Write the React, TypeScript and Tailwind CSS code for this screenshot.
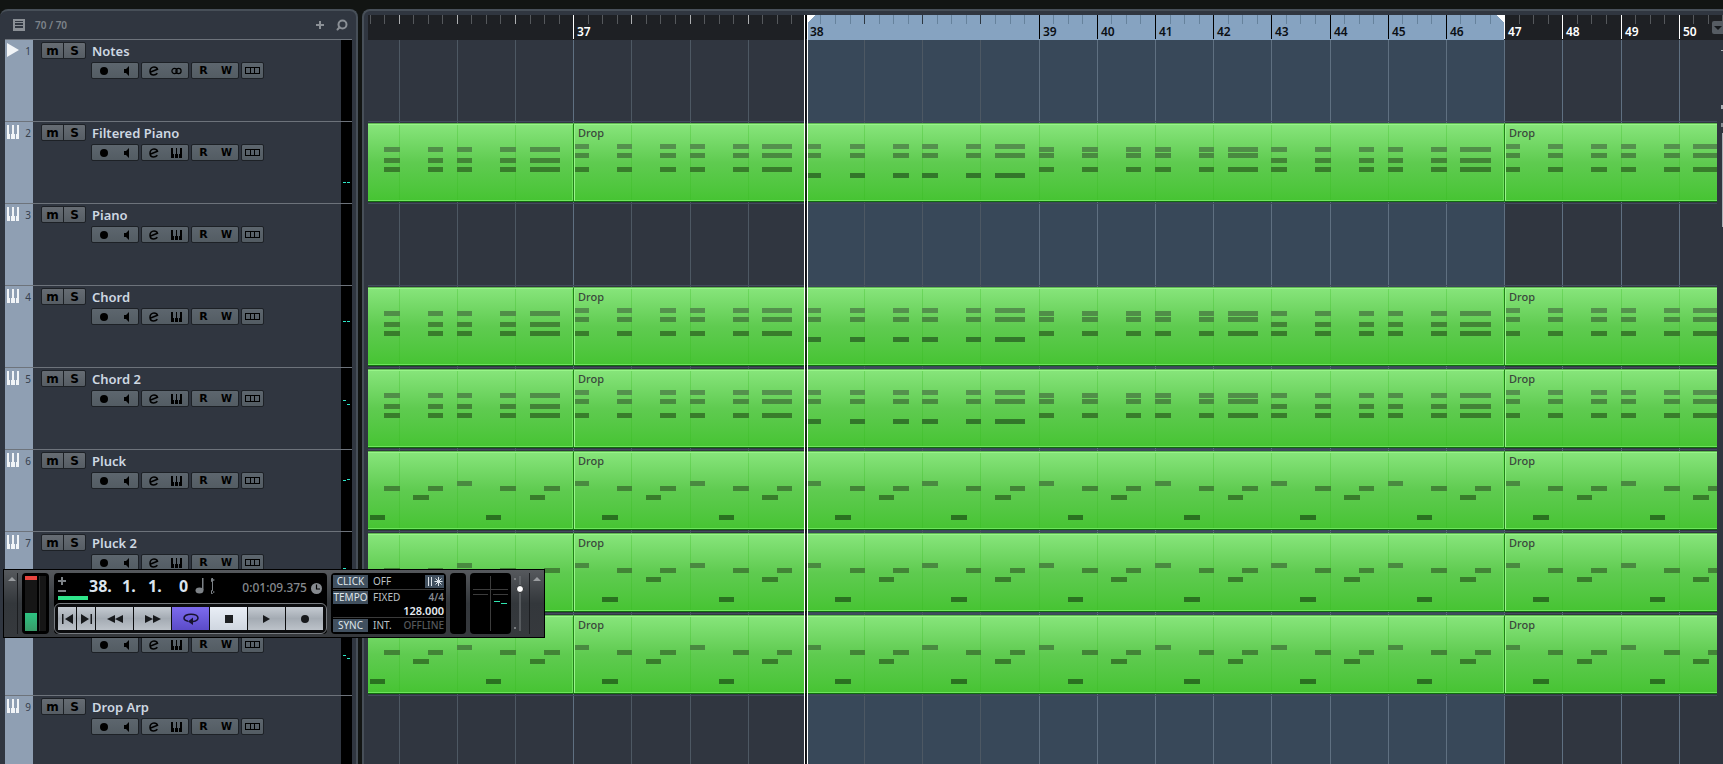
import React, { useState } from 'react';
import { Search } from 'lucide-react';

type Pattern = 'chordA' | 'chordB' | 'chordC' | 'chordD' | 'pluck';

interface Track {
  id: number;
  name: string;
  kind: 'marker' | 'instrument';
  content?: 'chord' | 'pluck';
  meter?: [number, number];
}

interface Section {
  cell: number;
  pattern: Pattern;
}

interface ClipData {
  start: number;
  end: number;
  label?: string;
  sections: Section[];
}

// One cell is the space between two grid lines, four ticks each
const ORIGIN = 31.12;
const CELL = 58.185;
const cellX = (cell: number) => Math.floor(ORIGIN + cell * CELL);

const tracks: Track[] = [
  { id: 1, name: 'Notes', kind: 'marker' },
  { id: 2, name: 'Filtered Piano', kind: 'instrument', content: 'chord', meter: [60, 60] },
  { id: 3, name: 'Piano', kind: 'instrument' },
  { id: 4, name: 'Chord', kind: 'instrument', content: 'chord', meter: [35, 35] },
  { id: 5, name: 'Chord 2', kind: 'instrument', content: 'chord', meter: [32, 36] },
  { id: 6, name: 'Pluck', kind: 'instrument', content: 'pluck', meter: [30, 29] },
  { id: 7, name: 'Pluck 2', kind: 'instrument', content: 'pluck', meter: [36, 40] },
  { id: 8, name: '', kind: 'instrument', content: 'pluck', meter: [41, 44] },
  { id: 9, name: 'Drop Arp', kind: 'instrument' },
];

const chordHits = [[0, 1], [3, 1], [6, 1], [8, 1], [11, 1], [13, 2]];
const chordRows: Record<string, number[]> = {
  chordA: [24, 35, 44],
  chordB: [21, 30, 44],
  chordC: [21, 30, 50],
  chordD: [24, 30, 44],
};
const pluckHits: [number, number][] = [
  [0, 30], [2, 64], [3, 35], [5, 44], [6, 35], [8, 30], [10, 64], [11, 35], [13, 44], [14, 35],
];

const noteColors: Record<number, string> = {
  21: '#54914d',
  24: '#508e48',
  30: '#498a40',
  35: '#428436',
  44: '#387d2b',
  50: '#32772a',
  64: '#2a7220',
};

const clips: ClipData[] = [
  { start: -13, end: 3, sections: [{ cell: -1, pattern: 'chordA' }] },
  {
    start: 3,
    end: 19,
    label: 'Drop',
    sections: [
      { cell: 3, pattern: 'chordB' },
      { cell: 7, pattern: 'chordC' },
      { cell: 11, pattern: 'chordD' },
      { cell: 15, pattern: 'chordA' },
    ],
  },
  {
    start: 19,
    end: 35,
    label: 'Drop',
    sections: [
      { cell: 19, pattern: 'chordB' },
      { cell: 23, pattern: 'chordC' },
      { cell: 27, pattern: 'chordD' },
      { cell: 31, pattern: 'chordA' },
    ],
  },
];

const bars: Record<number, number> = { 3: 37, 7: 38 };
for (let i = 11; i <= 22; i++) bars[i] = 28 + i;

const LOOP_START = 7;
const LOOP_END = 19;
const cells = Array.from({ length: 40 }, (_, i) => i);

function getNotes(section: Section) {
  if (section.pattern === 'pluck') {
    return pluckHits.map(([tick, y]) => ({ tick, len: 1, y }));
  }
  return chordHits.flatMap(([tick, len]) =>
    chordRows[section.pattern].map(y => ({ tick, len, y }))
  );
}

function Clip({ clip, content }: { clip: ClipData; content: 'chord' | 'pluck' }) {
  const left = cellX(clip.start);
  const width = cellX(clip.end) - left;
  const sections = content === 'chord'
    ? clip.sections
    : clip.sections.map(s => ({ ...s, pattern: 'pluck' as Pattern }));
  const lines = cells.filter(c => c > clip.start && c < clip.end);

  return (
    <div
      className="absolute top-px h-[79px] overflow-hidden border-y border-l border-t-[#5fb852] border-b-[#0f6b0c] border-l-[#23801a] bg-linear-to-b from-[#87e57b] via-[#5fcb50] to-[#46c432] shadow-[inset_1px_1px_0_#98f589,inset_-1px_-1px_0_#6de55c]"
      style={{ left, width }}
    >
      {lines.map(c => (
        <div key={c} className="absolute inset-y-px w-px bg-[#34b81e]/30" style={{ left: cellX(c) - left - 1 }} />
      ))}
      {clip.label && (
        <span className="absolute left-1 top-px text-[11px] font-medium leading-4 text-[#3a483c]">{clip.label}</span>
      )}
      <svg className="absolute -top-px left-px h-full w-full" shapeRendering="crispEdges">
        {sections.flatMap(section =>
          getNotes(section).map(n => {
            const x = cellX(section.cell + n.tick / 4);
            const end = cellX(section.cell + (n.tick + n.len) / 4) + 1;
            return (
              <rect
                key={`${section.cell}-${n.tick}-${n.y}`}
                x={x - left - 2}
                y={n.y}
                width={end - x}
                height="5"
                fill={noteColors[n.y]}
              />
            );
          })
        )}
      </svg>
    </div>
  );
}

function KeysIcon() {
  return (
    <svg className="h-3.5 w-3" viewBox="0 0 12 14" fill="currentColor" shapeRendering="crispEdges">
      <path d="M0 0h2v9h1v5H0zM5 0h2v9h1v5H4V9h1zM10 0h2v14H9V9h1z" />
    </svg>
  );
}

function MiniKeysIcon() {
  return (
    <svg className="h-2.5 w-[11px]" viewBox="0 0 11 10" fill="currentColor" shapeRendering="crispEdges">
      <path d="M0 0h2v6h1v4H0zM5 0h1v6h1v4H4V6h1zM9 0h2v10H8V6h1z" />
    </svg>
  );
}

function TrackControls({ track }: { track: Track }) {
  const group = 'flex h-[17px] items-center rounded-xs border border-[#1d2126] bg-linear-to-b from-[#5d666e] to-[#535c63] text-black';
  const cell = 'flex h-full w-6 flex-1 items-center justify-center';

  return (
    <div className="ml-[58px] mt-px flex gap-0.5">
      <div className={`${group} w-12`}>
        <button className={cell} aria-label={`Record enable ${track.name}`}>
          <span className="h-2 w-2 rounded-full bg-black" />
        </button>
        <button className={cell} aria-label={`Monitor ${track.name}`}>
          <svg className="h-2.5 w-2" viewBox="0 0 8 10" fill="currentColor">
            <path d="M1 3h2L6 0v10L3 7H1z" />
          </svg>
        </button>
      </div>
      <div className={`${group} w-12`}>
        <button className={cell} aria-label={`Edit ${track.name}`}>
          <svg className="h-2.5 w-2.5" viewBox="0 0 10 10" fill="none" stroke="currentColor" strokeWidth="1.500">
            <path d="M1 6.200L8.500 3.200C8 1.500 6.500.9 5 .9 2.500.9 1 3 1 5.200 1 7.500 2.600 9 4.700 9c1.500 0 2.700-.6 3.700-1.700" />
          </svg>
        </button>
        <button className={cell} aria-label={`Open instrument ${track.name}`}>
          {track.kind === 'marker' ? (
            <svg className="h-2 w-[11px]" viewBox="0 0 11 8" fill="none" stroke="currentColor" strokeWidth="1.200">
              <circle cx="3.500" cy="4" r="2.600" />
              <circle cx="7.500" cy="4" r="2.600" />
            </svg>
          ) : (
            <MiniKeysIcon />
          )}
        </button>
      </div>
      <div className={`${group} w-12 font-['DejaVu_Sans'] text-[11px] font-bold leading-none`}>
        <button className={cell} aria-label={`Read automation ${track.name}`}>R</button>
        <button className={`${cell} text-[10px]`} aria-label={`Write automation ${track.name}`}>W</button>
      </div>
      <div className={`${group} w-[23px]`}>
        <button className={cell} aria-label={`Show lanes ${track.name}`}>
          <svg className="h-[7px] w-[15px]" viewBox="0 0 15 7" fill="none" stroke="currentColor" shapeRendering="crispEdges">
            <path d="M.5.5h14v6H.5zM5.500.5v6M9.500.5v6" />
          </svg>
        </button>
      </div>
    </div>
  );
}

function TrackRow({ track }: { track: Track }) {
  return (
    <li className="flex h-[82px] shrink-0 border-t border-[#6d737b]">
      <div className="flex w-7 justify-between bg-[#8f9fb3] pl-0.5 pr-0.5 pt-[3px] text-[#f1f4f7]">
        {track.kind === 'marker' ? (
          <svg className="h-3.5 w-3" viewBox="0 0 12 14" fill="currentColor">
            <path d="M0 0l12 7L0 14z" />
          </svg>
        ) : (
          <KeysIcon />
        )}
        <span className="text-[10px] leading-4 text-[#36404d]">{track.id}</span>
      </div>
      <div className="flex-1">
        <div className="flex h-[19px] items-start pl-2 pt-0.5">
          <div className="flex h-[17px] w-[45px] rounded-xs border border-[#1d2126] bg-linear-to-b from-[#666c73] to-[#565d64] font-['DejaVu_Sans'] text-xs font-bold leading-[14px] text-black">
            <button className="flex-1 border-r border-[#1d2126]" aria-label={`Mute ${track.name}`}>m</button>
            <button className="flex-1" aria-label={`Solo ${track.name}`}>S</button>
          </div>
          <span className="ml-1.5 text-[13px] font-semibold leading-[19px] text-[#ced8e2]">{track.name}</span>
        </div>
        <div className="pt-0.5">
          <TrackControls track={track} />
        </div>
      </div>
      <div className="relative w-[11px] bg-black">
        {track.meter?.map((y, i) => (
          <div
            key={i}
            className={i === 0 ? 'absolute left-0.5 h-px w-[3px] bg-[#2ee6c8]' : 'absolute left-1.5 h-px w-[3px] bg-[#2ee6c8]'}
            style={{ top: y }}
          />
        ))}
      </div>
    </li>
  );
}

function Ruler() {
  const loopLeft = cellX(LOOP_START);
  const loopRight = cellX(LOOP_END);
  const inLoop = (c: number) => c >= LOOP_START && c < LOOP_END;
  const ticks = Array.from({ length: 164 }, (_, i) => i / 4 - 1);

  return (
    <div className="relative h-[25px] shrink-0 overflow-hidden bg-[#1e2024]">
      <div className="absolute inset-y-0 bg-[#86a3c1]" style={{ left: loopLeft, width: loopRight - loopLeft }} />
      <svg className="absolute inset-0 h-full w-full" shapeRendering="crispEdges">
        {ticks.map(c => {
          const isCell = Number.isInteger(c);
          const isBar = bars[c] !== undefined;
          const loop = inLoop(c);
          let fill = loop ? '#66829c' : '#55585c';
          if (isCell) fill = loop ? '#2c3640' : '#aeb0b2';
          if (isBar) fill = loop ? '#000000' : '#ffffff';
          return <rect key={c} x={cellX(c)} y="0" width="1" height={isBar ? 24 : 9} fill={fill} />;
        })}
        <path d={`M${loopLeft + 1} 0h8l-8 8z`} fill="#fff" />
        <path d={`M${loopRight} 0h-8l8 8z`} fill="#fff" />
      </svg>
      {Object.entries(bars).map(([c, bar]) => (
        <span
          key={bar}
          className={`absolute top-[9px] text-xs font-semibold leading-4 ${inLoop(Number(c)) ? 'text-[#0b0f14]' : 'text-white'}`}
          style={{ left: cellX(Number(c)) + 4 }}
        >
          {bar}
        </span>
      ))}
      <button className="absolute right-0 top-1.5 flex h-[13px] w-[11px] items-center justify-center rounded-l-xs bg-[#565c63]" aria-label="Ruler options">
        <svg className="h-1.5 w-2" viewBox="0 0 8 6" fill="#15181c"><path d="M0 1h8L4 5z" /></svg>
      </button>
    </div>
  );
}

function Timeline() {
  const loopLeft = cellX(LOOP_START);
  const loopRight = cellX(LOOP_END);

  return (
    <main className="relative flex min-w-0 flex-1 flex-col rounded-tl-lg border-l-2 border-t-2 border-[#474f58] bg-[#303640] pl-1 pt-1">
      <Ruler />
      <div className="flex min-h-0 flex-1">
        <div className="relative min-w-0 flex-1 overflow-hidden">
          <div className="absolute inset-y-0 bg-[#384859]" style={{ left: loopLeft, width: loopRight - loopLeft }} />
          {cells.map(c => (
            <div
              key={c}
              className={`absolute inset-y-0 w-px ${bars[c] ? 'bg-[#5f7081]' : 'bg-[#4d5863]'}`}
              style={{ left: cellX(c) }}
            />
          ))}
          {tracks.map(track => (
            <div key={track.id} className="relative h-[82px] border-b border-[#424b5c]">
              {track.content && clips.map(clip => (
                <Clip key={clip.start} clip={clip} content={track.content!} />
              ))}
            </div>
          ))}
        </div>
        {/* zoom controls and scrollbar */}
        <div className="flex w-1.5 flex-col items-end">
          <span className="mt-2.5 h-px w-0.5 bg-[#aab0b6]" />
          <span className="mt-[54px] h-1 w-0.5 bg-[#aab0b6]" />
          <span className="mt-3.5 h-1 w-0.5 bg-[#888e94]" />
          <span className="mt-1.5 h-[94px] w-px bg-[#aab0b6]" />
        </div>
      </div>
      {/* playhead */}
      <div className="absolute bottom-0 top-1 ml-1 w-1 border-x border-white bg-black/75" style={{ left: loopLeft - 2 }} />
    </main>
  );
}

function Transport() {
  const [level, setLevel] = useState(80);
  const key = 'flex w-[37px] items-center justify-center bg-linear-to-b from-[#c5cbd2] via-[#a4abb3] to-[#bcc2c9] text-[#17191c]';
  const tag = 'h-[13px] w-[35px] bg-[#41505f] text-center text-[#dfe5ea]';

  return (
    <section
      aria-label="Transport"
      className="absolute left-[3px] top-[569px] flex h-[69px] w-[542px] border border-black bg-linear-to-b from-[#56595d] via-[#33373b] to-[#36393d] py-[3px]"
    >
      <button className="flex w-3.5 justify-center border-r border-[#1b1d20] pt-1" aria-label="Collapse left">
        <svg className="ml-0.5 h-1 w-2" viewBox="0 0 8 4" fill="#9a9da0"><path d="M0 4l4-4 4 4z" /></svg>
      </button>

      <div className="ml-1 flex w-[27px] gap-0.5 rounded-sm bg-black p-[3px]">
        <div className="flex w-3 flex-col justify-between bg-[#161616]">
          <div className="h-1 bg-[#e8453f]" />
          <div className="h-[18px] bg-linear-to-b from-[#2cc382] to-[#379a68]" />
        </div>
        <div className="flex-1 border-l border-[#303030] bg-[#161616]" />
      </div>

      <div className="ml-[5px] flex w-[273px] flex-col rounded-sm bg-black">
        <div className="flex h-[30px] items-center">
          <div className="ml-1 flex w-[30px] flex-col">
            <svg className="h-[18px] w-2" viewBox="0 0 8 18" stroke="#7d8287" strokeWidth="2" shapeRendering="crispEdges">
              <path d="M0 5h8M4 1v8M0 15h8" />
            </svg>
            <div className="mt-0.5 h-1 w-full bg-[#2fe58b]" />
          </div>
          <div className="-mt-1 ml-px flex text-base font-bold leading-5 text-[#dbe4ee]">
            <span className="w-[33px]">38.</span>
            <span className="w-[26px]">1.</span>
            <span className="w-[31px]">1.</span>
            <span className="w-4">0</span>
          </div>
          <svg className="-mt-1 h-[18px] w-5" viewBox="0 0 20 18" fill="#7d8287">
            <path d="M7 1h1.500v12H7z" />
            <ellipse cx="4.500" cy="13.500" rx="4" ry="3" />
            <path d="M17 1h1v16h-1zM16 1l4 2-4 2zM16 17l4-2-4-2z" />
          </svg>
          <span className="ml-auto text-xs font-medium text-[#85898e]">0:01:09.375</span>
          <svg className="ml-1 mr-[5px] h-[11px] w-[11px]" viewBox="0 0 11 11">
            <circle cx="5.500" cy="5.500" r="5.500" fill="#85898e" />
            <path d="M5.500 1.500v4.500h3.500" fill="none" stroke="#000" strokeWidth="1.200" />
          </svg>
        </div>
        <div className="flex h-[31px] gap-px rounded-md border border-[#777b80] bg-[#0b0c0e] p-[3px]">
          <button className={`${key} w-[18px]!`} aria-label="Go to left locator">
            <svg className="h-2.5 w-[11px]" viewBox="0 0 11 10" fill="currentColor"><path d="M0 0h1.500v10H0zM11 0v10L3 5z" /></svg>
          </button>
          <button className={`${key} w-[18px]!`} aria-label="Go to right locator">
            <svg className="h-2.5 w-[11px]" viewBox="0 0 11 10" fill="currentColor"><path d="M9.500 0H11v10H9.500zM0 0v10l8-5z" /></svg>
          </button>
          <button className={key} aria-label="Rewind">
            <svg className="h-2 w-4" viewBox="0 0 16 8" fill="currentColor"><path d="M8 0v8L0 4zM16 0v8L8 4z" /></svg>
          </button>
          <button className={key} aria-label="Fast forward">
            <svg className="h-2 w-4" viewBox="0 0 16 8" fill="currentColor"><path d="M0 0v8l8-4zM8 0v8l8-4z" /></svg>
          </button>
          <button className="flex w-[37px] items-center justify-center bg-linear-to-b from-[#7d6bee] to-[#5b4bc8]" aria-label="Cycle">
            <svg className="h-3 w-4" viewBox="0 0 16 12" fill="none" stroke="#17122e" strokeWidth="1.500">
              <path d="M5 8.200C2.500 7.700 1 6.400 1 5c0-2.200 3-3.800 7-3.800S15 2.800 15 5c0 1.700-2 3.100-5 3.600" />
              <path d="M10 4.500v7.500L5 8.500z" fill="#17122e" stroke="none" />
            </svg>
          </button>
          <button className="flex w-[37px] items-center justify-center bg-linear-to-b from-[#e9eef6] to-[#cfd6e0]" aria-label="Stop">
            <span className="h-2 w-2 bg-[#1d1f22]" />
          </button>
          <button className={key} aria-label="Play">
            <svg className="h-2 w-[7px]" viewBox="0 0 7 8" fill="currentColor"><path d="M0 0v8l7-4z" /></svg>
          </button>
          <button className={key} aria-label="Record">
            <span className="h-2 w-2 rounded-full bg-[#17191c]" />
          </button>
        </div>
      </div>

      <div className="ml-1 flex w-[115px] flex-col rounded-sm bg-black px-0.5 pt-0.5 text-[10px] leading-[13px] text-[#bcc1c6]">
        <div className="flex h-[15px] gap-[5px] border-b border-[#3a3a3a] pb-px">
          <button className={tag}>CLICK</button>
          <span>OFF</span>
          <button className="ml-auto flex w-[19px] items-center justify-center bg-[#41505f]" aria-label="Precount">
            <svg className="h-[9px] w-4" viewBox="0 0 16 9" stroke="#dfe5ea" fill="none">
              <path d="M1.500 0v9M4.500 0v9M11.500 0v9M7.500 4.500h8M8.500 1.500l6 6M14.500 1.500l-6 6" />
            </svg>
          </button>
        </div>
        <div className="mt-px flex gap-[5px]">
          <button className={tag}>TEMPO</button>
          <span>FIXED</span>
          <span className="ml-auto font-semibold text-[#85898e]">4/4</span>
        </div>
        <div className="border-b border-[#3a3a3a] text-right text-[11px] font-semibold text-[#e6ecf2]">128.000</div>
        <div className="mt-px flex gap-[5px]">
          <button className={tag}>SYNC</button>
          <span>INT.</span>
          <span className="ml-auto font-medium text-[#55585b]">OFFLINE</span>
        </div>
      </div>

      <div className="ml-1 w-4 rounded-sm bg-black" />

      <div className="ml-1 w-[41px] rounded-sm bg-black">
        <svg className="h-full w-full" viewBox="0 0 41 61" shapeRendering="crispEdges">
          <path d="M20.500 3v55M3 16.500h35M3 21.500h15M23 21.500h15" stroke="#3c3c3c" />
          <path d="M24 28.500h6M31 30.500h6" stroke="#2fe5b0" />
        </svg>
      </div>

      <div className="ml-[3px] flex items-center">
        <div className="flex h-[51px] flex-col justify-between">
          <span className="h-0.5 w-0.5 bg-[#7a7d80]" />
          <span className="h-0.5 w-0.5 bg-[#7a7d80]" />
        </div>
        <input
          type="range"
          aria-label="Output level"
          value={level}
          onChange={e => setLevel(Number(e.target.value))}
          className="h-[55px] w-2 appearance-none bg-linear-to-r from-transparent via-[#777b7f] to-transparent bg-[length:2px_100%] bg-center bg-no-repeat [direction:rtl] [writing-mode:vertical-lr] [&::-webkit-slider-thumb]:h-2 [&::-webkit-slider-thumb]:w-2 [&::-webkit-slider-thumb]:appearance-none [&::-webkit-slider-thumb]:rounded-full [&::-webkit-slider-thumb]:border [&::-webkit-slider-thumb]:border-[#26282b] [&::-webkit-slider-thumb]:bg-white"
        />
      </div>

      <button className="ml-auto flex w-[15px] justify-center border-l border-[#1b1d20] pt-1" aria-label="Collapse right">
        <svg className="h-1 w-2" viewBox="0 0 8 4" fill="#9a9da0"><path d="M0 4l4-4 4 4z" /></svg>
      </button>
    </section>
  );
}

export default function App() {
  return (
    <div className="relative flex h-screen gap-1 overflow-hidden bg-[#121513] pt-[9px] font-['Noto_Sans',sans-serif]">
      <aside className="flex w-[358px] shrink-0 flex-col rounded-t-lg border-r-2 border-t-2 border-[#474f58] bg-[#303640] pl-[5px] pr-1">
        <header className="flex h-7 shrink-0 items-center px-2 text-[#8b9096]">
          <svg className="h-3 w-3" viewBox="0 0 12 12" fill="none" stroke="currentColor" shapeRendering="crispEdges">
            <path d="M1 1h10v10H1z" strokeWidth="2" />
            <path d="M2 3.500h8M2 6.500h8M2 9.500h8" />
          </svg>
          <span className="ml-2.5 text-[10px] font-semibold text-[#7d838a]">70 / 70</span>
          <button className="ml-auto" aria-label="Add track">
            <svg className="h-2 w-2" viewBox="0 0 8 8" stroke="currentColor" strokeWidth="2" shapeRendering="crispEdges"><path d="M0 4h8M4 0v8" /></svg>
          </button>
          <button className="-mr-1 ml-3" aria-label="Find track">
            <Search className="h-3 w-3 -scale-x-100" strokeWidth={4} />
          </button>
        </header>
        <ul className="min-h-0 flex-1 overflow-hidden">
          {tracks.map(track => (
            <TrackRow key={track.id} track={track} />
          ))}
        </ul>
      </aside>
      <Timeline />
      <Transport />
    </div>
  );
}
